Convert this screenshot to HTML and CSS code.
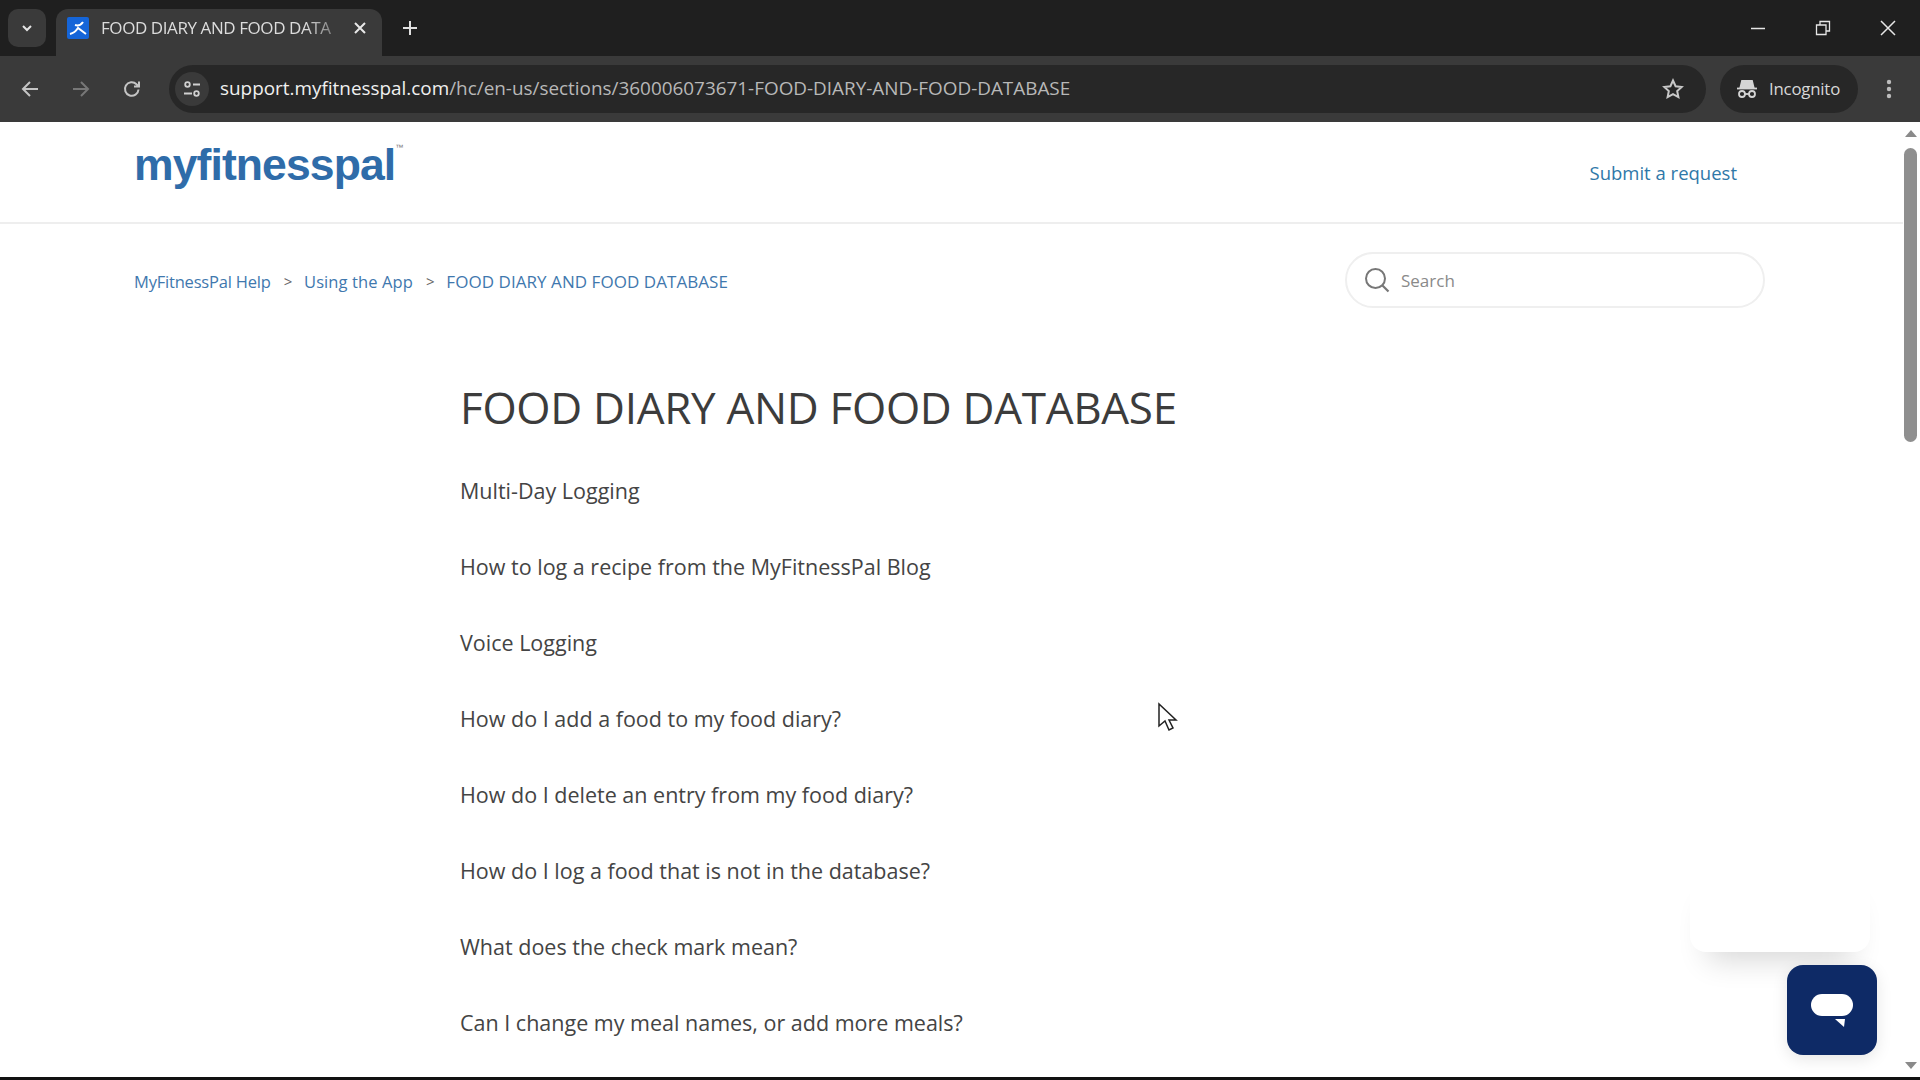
FILE: index.html
```html
<!DOCTYPE html>
<html lang="en">
<head>
<meta charset="utf-8">
<title>FOOD DIARY AND FOOD DATABASE</title>
<link rel="stylesheet" href="styles.css">
</head>
<body>
<div class="tabstrip">
  <div class="tabsearch"><svg width="14" height="14" viewBox="0 0 14 14"><path d="M3 5l4 4 4-4" fill="none" stroke="#e4e4e4" stroke-width="2"/></svg></div>
  <div class="tab">
    <span class="favicon"><svg width="22" height="22" viewBox="0 0 22 22"><rect width="22" height="22" rx="2" fill="#1565d8"/><path d="M3 17c4-1 6-3 8-6l8 6M8 8c3 1 6 0 8-3" fill="none" stroke="#fff" stroke-width="2"/></svg></span>
    <span class="tabtitle">FOOD DIARY AND FOOD DATA</span>
    <svg class="tabclose" width="14" height="14" viewBox="0 0 14 14"><path d="M2 2l10 10M12 2L2 12" stroke="#e8e8e8" stroke-width="2"/></svg>
  </div>
  <svg class="newtab" width="16" height="16" viewBox="0 0 16 16"><path d="M8 1v14M1 8h14" stroke="#e0e0e0" stroke-width="2"/></svg>
  <div class="winctl">
    <svg width="16" height="16" viewBox="0 0 16 16"><path d="M1 8.500h14" stroke="#e6e6e6" stroke-width="1.500"/></svg>
    <svg width="16" height="16" viewBox="0 0 16 16"><path d="M1.500 5h9.500v9.500H1.500zM5 5V1.500h9.500V11H11" fill="none" stroke="#e6e6e6" stroke-width="1.300"/></svg>
    <svg width="16" height="16" viewBox="0 0 16 16"><path d="M1 1l14 14M15 1L1 15" stroke="#e6e6e6" stroke-width="1.500"/></svg>
  </div>
</div>
<div class="toolbar">
  <svg class="navicon" width="20" height="20" viewBox="0 0 20 20"><path d="M18 10H3M10 3l-7 7 7 7" fill="none" stroke="#c4c4c4" stroke-width="2"/></svg>
  <svg class="navicon" width="20" height="20" viewBox="0 0 20 20"><path d="M2 10h15M10 3l7 7-7 7" fill="none" stroke="#777" stroke-width="2"/></svg>
  <svg class="navicon" width="20" height="20" viewBox="0 0 20 20"><path d="M16.500 10.500a6.800 6.800 0 1 1-2-5.300L17 7.500M17 2.500v5h-5" fill="none" stroke="#c4c4c4" stroke-width="2"/></svg>
  <div class="omnibox">
    <span class="sitebtn"><svg width="20" height="20" viewBox="0 0 20 20"><g fill="none" stroke="#d0d0d0" stroke-width="1.800"><circle cx="5.500" cy="5.500" r="2.300"/><path d="M11 5.500h7M2 14.500h8"/><circle cx="14.500" cy="14.500" r="2.300"/></g></svg></span>
    <span class="url"><b>support.myfitnesspal.com</b>/hc/en-us/sections/360006073671-FOOD-DIARY-AND-FOOD-DATABASE</span>
    <svg class="star" width="22" height="22" viewBox="0 0 22 22"><path d="M11 2.500l2.600 5.700 6.100.7-4.500 4.200 1.200 6.100L11 16.200l-5.400 3 1.200-6.100-4.500-4.200 6.100-.7z" fill="none" stroke="#c8c8c8" stroke-width="2"/></svg>
  </div>
  <div class="incognito">
    <svg width="22" height="22" viewBox="0 0 22 22"><g fill="none" stroke="#d4d4d4" stroke-width="1.800"><path d="M6 3h10l1.500 6h-13z" fill="#d4d4d4"/><path d="M1 10.500h20"/><circle cx="6" cy="16" r="3"/><circle cx="16" cy="16" r="3"/><path d="M9 16h4"/></g></svg>
    <span class="incognito-label">Incognito</span>
  </div>
  <svg class="menu" width="6" height="22" viewBox="0 0 6 22"><circle cx="3" cy="4" r="2.200" fill="#bdbdbd"/><circle cx="3" cy="11" r="2.200" fill="#bdbdbd"/><circle cx="3" cy="18" r="2.200" fill="#bdbdbd"/></svg>
</div>
<div class="viewport">
  <div class="page">
    <header class="siteheader">
      <a class="logo">myfitnesspal<sup>™</sup></a>
      <a class="submit">Submit a request</a>
    </header>
    <div class="subnav">
      <nav class="crumbs">
        <a>MyFitnessPal Help</a><span class="sep">&gt;</span>
        <a class="mid">Using the App</a><span class="sep">&gt;</span>
        <a class="current">FOOD DIARY AND FOOD DATABASE</a>
      </nav>
      <div class="search">
        <svg width="28" height="28" viewBox="0 0 28 28"><circle cx="12.500" cy="12.500" r="9.500" fill="none" stroke="#777" stroke-width="2"/><path d="M19.500 19.500l6 6" stroke="#777" stroke-width="2.200"/></svg>
        <span>Search</span>
      </div>
    </div>
    <main class="section">
      <h1>FOOD DIARY AND FOOD DATABASE</h1>
      <ul class="articles">
        <li>Multi-Day Logging</li>
        <li>How to log a recipe from the MyFitnessPal Blog</li>
        <li>Voice Logging</li>
        <li>How do I add a food to my food diary?</li>
        <li>How do I delete an entry from my food diary?</li>
        <li>How do I log a food that is not in the database?</li>
        <li>What does the check mark mean?</li>
        <li>Can I change my meal names, or add more meals?</li>
      </ul>
    </main>
  </div>
  <div class="scrollbar">
    <i class="arrow up"></i>
    <div class="thumb"></div>
    <i class="arrow down"></i>
  </div>
  <div class="chatshadow"></div>
  <div class="chat"><svg width="44" height="38" viewBox="0 0 44 38"><rect x="1" y="1" width="42" height="22" rx="11" fill="#fff"/><path d="M25 26l10 0-1 8z" fill="#fff"/></svg></div>
  <svg class="cursor" width="22" height="30" viewBox="0 0 22 30"><path d="M2 2v22l6-5 4 9 4-2-4-8h7z" fill="#fff" stroke="#222" stroke-width="1.500"/></svg>
</div>
<div class="bottomedge"></div>
</body>
</html>
```
FILE: styles.css
```css
* { box-sizing: border-box; }
html, body { margin: 0; height: 100%; overflow: hidden; }
body { display: flex; flex-direction: column; background: #fff; font-family: "Open Sans", "Noto Sans", sans-serif; }
a { text-decoration: none; }

.tabstrip { height: 56px; flex: none; background: #1f1f1f; display: flex; align-items: flex-start; padding: 9px 0 0 8px; position: relative; }
.tabsearch { width: 38px; height: 38px; border-radius: 10px; background: #3a3a3a; display: flex; align-items: center; justify-content: center; }
.tab { width: 326px; height: 47px; margin-left: 10px; background: #3a3a3a; border-radius: 12px 12px 0 0; display: flex; align-items: center; padding: 0 15px 10px 11px; gap: 12px; font-size: 17px; color: #dcdcdc; }
.favicon { width: 22px; height: 22px; flex: none; display: flex; }
.tabtitle { flex: 1; overflow: hidden; white-space: nowrap; letter-spacing: -0.42px; -webkit-mask-image: linear-gradient(90deg, #000 85%, rgba(0,0,0,.25)); mask-image: linear-gradient(90deg, #000 85%, rgba(0,0,0,.25)); }
.tabclose { flex: none; }
.newtab { margin: 11px 0 0 20px; }
.winctl { margin-left: auto; display: flex; gap: 49px; padding: 11px 24px 0 0; }

.toolbar { height: 66px; flex: none; background: #3a3a3a; display: flex; align-items: center; padding: 0 20px 0 20px; }
.navicon { flex: none; margin-right: 31px; }
.navicon:nth-child(3) { margin-right: 27px; }
.omnibox { width: 1537px; height: 48px; border-radius: 24px; background: #272727; display: flex; align-items: center; padding: 0 8px 0 6px; color: #b8b8b8; font-size: 18.900px; flex: none; }
.sitebtn { width: 34px; height: 34px; border-radius: 50%; background: #3a3a3a; display: flex; align-items: center; justify-content: center; flex: none; }
.url { margin-left: 11px; padding-bottom: 2px; white-space: nowrap; }
.url b { font-weight: 400; color: #f0f0f0; }
.star { margin-left: auto; margin-right: 14px; margin-bottom: 1px; }
.incognito { margin-left: 14px; width: 138px; height: 48px; border-radius: 24px; background: #272727; display: flex; align-items: center; gap: 11px; padding-left: 16px; color: #d8d8d8; font-size: 16.800px; letter-spacing: -0.2px; flex: none; }
.incognito-label { padding-bottom: 2px; }
.menu { margin-left: 28px; flex: none; }

.viewport { flex: 1; min-height: 0; display: flex; position: relative; }
.page { flex: 1; min-width: 0; overflow: hidden; }
.siteheader { height: 102px; border-bottom: 2px solid #eeeeee; display: flex; justify-content: space-between; align-items: center; padding: 0 166px 0 134px; }
.logo { font-family: "Liberation Sans", sans-serif; font-weight: 700; font-size: 44.500px; letter-spacing: -0.9px; color: #2f6ca9; position: relative; margin-top: -14px; line-height: 1; }
.logo sup { font-size: 8px; font-weight: 400; color: #777; vertical-align: 30px; line-height: 0; }
.submit { font-size: 18.500px; color: #2f78a8; }

.subnav { display: flex; justify-content: space-between; padding: 28px 138px 0 134px; align-items: flex-start; }
.crumbs { font-size: 16.500px; color: #3f78ae; display: flex; height: 58px; align-items: center; letter-spacing: -0.2px; }
.mid { letter-spacing: 0.1px; }
.current { font-size: 17px; letter-spacing: 0.05px; }
.sep { margin: 0 12px 0 13px; color: #666; font-size: 15px; }
.search { width: 420px; height: 56px; border: 2px solid #efefef; border-radius: 28px; display: flex; align-items: center; padding-left: 16px; gap: 10px; font-size: 17px; color: #8a8a8a; }
.search svg { flex: none; }

.section { padding: 67px 0 0 460px; }
h1 { margin: 0; font-size: 44px; font-weight: 400; line-height: 60px; color: #3c3c3c; letter-spacing: -0.3px; white-space: nowrap; }
.articles { list-style: none; margin: 39px 0 0; padding: 0; font-size: 21.500px; line-height: 30px; color: #444; }
.articles li { height: 76px; white-space: nowrap; }

.scrollbar { width: 17px; flex: none; background: #fff; position: relative; }
.thumb { position: absolute; top: 26px; left: 1px; width: 13px; height: 294px; border-radius: 7px; background: #8f8f8f; }
.arrow { position: absolute; left: 2px; width: 0; height: 0; border-left: 6px solid transparent; border-right: 6px solid transparent; }
.arrow.up { top: 8px; border-bottom: 7px solid #8a8a8a; }
.arrow.down { bottom: 8px; border-top: 7px solid #8a8a8a; }

.chatshadow { position: absolute; left: 1690px; top: 740px; width: 180px; height: 90px; border-radius: 16px; box-shadow: 0 26px 30px -18px rgba(0,0,0,.16); }
.chat { position: absolute; left: 1787px; top: 843px; width: 90px; height: 90px; border-radius: 16px; background: #0e2a66; display: flex; align-items: center; justify-content: center; padding-top: 4px; box-shadow: 0 4px 16px rgba(0,0,0,.1); }
.cursor { position: absolute; left: 1157px; top: 580px; }
.bottomedge { height: 3px; flex: none; background: #111; }
```
